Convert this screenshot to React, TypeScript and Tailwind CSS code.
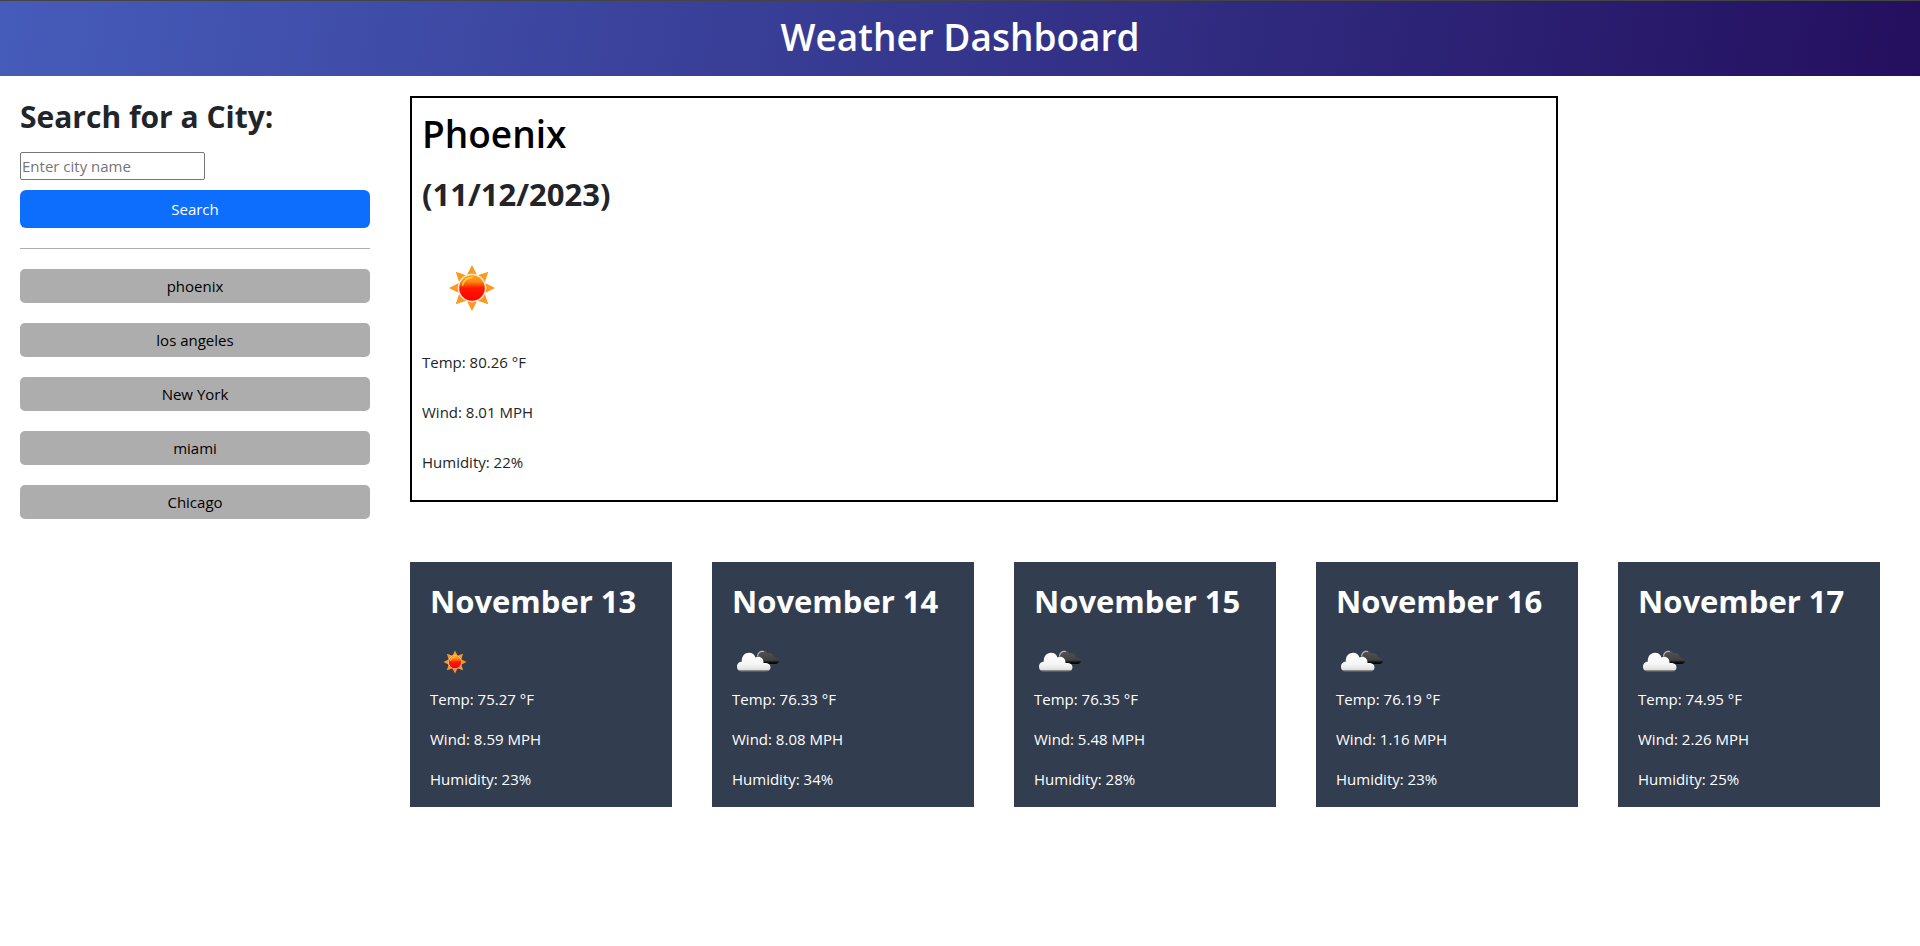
import { useId } from "react";

type Condition = "sun" | "clouds";

interface Forecast {
  day: string;
  condition: Condition;
  temp: string;
  wind: string;
  humidity: string;
}

const history = ["phoenix", "los angeles", "New York", "miami", "Chicago"];

const forecasts: Forecast[] = [
  { day: "November 13", condition: "sun", temp: "75.27", wind: "8.59", humidity: "23" },
  { day: "November 14", condition: "clouds", temp: "76.33", wind: "8.08", humidity: "34" },
  { day: "November 15", condition: "clouds", temp: "76.35", wind: "5.48", humidity: "28" },
  { day: "November 16", condition: "clouds", temp: "76.19", wind: "1.16", humidity: "23" },
  { day: "November 17", condition: "clouds", temp: "74.95", wind: "2.26", humidity: "25" },
];

const rays = [0, 45, 90, 135, 180, 225, 270, 315];

function SunIcon({ className }: { className: string }) {
  const id = useId();
  return (
    <svg viewBox="0 0 100 100" className={className} role="img" aria-label="Clear sky">
      <defs>
        <linearGradient id={id} x1="0" y1="0" x2="0" y2="1">
          <stop offset="0" stopColor="#ffa01a" />
          <stop offset="0.25" stopColor="#fb8a10" />
          <stop offset="0.5" stopColor="#ff1a00" />
          <stop offset="1" stopColor="#ff0000" />
        </linearGradient>
      </defs>
      {rays.map((angle) => (
        <path key={angle} d="M50 27 L55 36.8 Q50 34.8 45 36.8 Z" fill="#fb9a1c" transform={`rotate(${angle} 50 50)`} />
      ))}
      <circle cx="50" cy="50" r="14.2" fill="#fde3d2" />
      <circle cx="50" cy="50" r="12.8" fill={`url(#${id})`} />
      <path d="M40.5 47 A10.5 10.5 0 0 1 50 39.4" fill="none" stroke="#ffd23c" strokeWidth="1.6" strokeLinecap="round" />
    </svg>
  );
}

function CloudsIcon({ className }: { className: string }) {
  const id = useId();
  return (
    <svg viewBox="0 0 100 100" className={className} role="img" aria-label="Broken clouds">
      <defs>
        <linearGradient id={`${id}w`} x1="0" y1="0" x2="0" y2="1">
          <stop offset="0" stopColor="#ffffff" />
          <stop offset="0.6" stopColor="#f6f6f6" />
          <stop offset="0.88" stopColor="#e2e2e2" />
          <stop offset="0.93" stopColor="#8a8a8a" />
          <stop offset="1" stopColor="#5c5c60" />
        </linearGradient>
        <linearGradient id={`${id}d`} x1="0" y1="0" x2="0" y2="1">
          <stop offset="0" stopColor="#555555" />
          <stop offset="0.72" stopColor="#404040" />
          <stop offset="0.85" stopColor="#141414" />
          <stop offset="1" stopColor="#000000" />
        </linearGradient>
      </defs>
      <path
        d="M50 52 C47 39 51 27 61 27 C66 27 69 29.500 71 33 C78 31 83.500 35 84 41 C90 41 94 44 94 47.500 C94 51 91 54 87 54 L52 54 Z"
        fill={`url(#${id}d)`}
      />
      <path d="M51 38 C52 31 57 27.500 63 29" fill="none" stroke="#b4b4b4" strokeWidth="2.4" strokeLinecap="round" />
      <path
        d="M20 69.500 C14 69.500 10 65 10 59.500 C10 53 14.500 49.500 19.500 49.500 C19 39 25 31.500 34 31.500 C41 31.500 45 35.500 47 41 C55 37 63.500 42 63 52 C71 51 77 54 77 60.500 C77 65.500 73 69.500 68 69.500 Z"
        fill={`url(#${id}w)`}
      />
    </svg>
  );
}

function ForecastCard({ forecast }: { forecast: Forecast }) {
  return (
    <article className="flex-1 bg-[#323d4f] px-5 pt-5 pb-4 text-white">
      <h2 className="mb-[17px] text-[31px] leading-[38px] font-bold whitespace-nowrap">{forecast.day}</h2>
      {forecast.condition === "sun" ? <SunIcon className="size-[50px]" /> : <CloudsIcon className="size-[50px]" />}
      <div className="flex flex-col gap-4">
        <p>Temp: {forecast.temp} °F</p>
        <p>Wind: {forecast.wind} MPH</p>
        <p>Humidity: {forecast.humidity}%</p>
      </div>
    </article>
  );
}

export default function App() {
  return (
    <div className="min-h-screen bg-white font-['Open_Sans','Noto_Sans',sans-serif] text-[15px] leading-6 text-[#212529]">
      <header className="border-t border-[#444444] bg-linear-[100deg,#465cba,#240f5e] pt-3 pb-[15px] text-center">
        <h1 className="text-[37px] leading-[48px] font-semibold text-white">Weather Dashboard</h1>
      </header>

      <div className="flex">
        <aside className="w-[390px] shrink-0 p-5">
          <form className="flex flex-col items-start" onSubmit={(event) => event.preventDefault()}>
            <label htmlFor="city" className="mt-0.5 mb-4 text-[30px] leading-[38px] font-bold">
              Search for a City:
            </label>
            <input
              id="city"
              type="text"
              placeholder="Enter city name"
              className="h-7 w-[185px] rounded-[2px] border border-[#767676] px-px placeholder:text-[#757575]"
            />
            <button type="submit" className="mt-[10px] h-[38px] w-full rounded-md bg-[#0d6efd] text-white">
              Search
            </button>
          </form>
          <hr className="my-5 border-[#adadad]" />
          <div className="flex flex-col gap-5">
            {history.map((city) => (
              <button key={city} type="button" className="h-[34px] rounded-[5px] bg-[#adadad] text-black">
                {city}
              </button>
            ))}
          </div>
        </aside>

        <main className="min-w-0 flex-1">
          <section className="mt-5 ml-5 w-3/4 border-2 border-black px-[10px] pt-3 pb-[26px]">
            <h2 className="text-[37px] leading-[48px] font-semibold text-black">Phoenix</h2>
            <h3 className="mt-[17px] mb-[25px] text-[31px] leading-[38px] font-bold">(11/12/2023)</h3>
            <SunIcon className="size-[100px]" />
            <div className="mt-3 flex flex-col gap-[26px]">
              <p>Temp: 80.26 °F</p>
              <p>Wind: 8.01 MPH</p>
              <p>Humidity: 22%</p>
            </div>
          </section>

          <section className="mt-[60px] mr-10 ml-5 flex gap-10">
            {forecasts.map((forecast) => (
              <ForecastCard key={forecast.day} forecast={forecast} />
            ))}
          </section>
        </main>
      </div>
    </div>
  );
}
